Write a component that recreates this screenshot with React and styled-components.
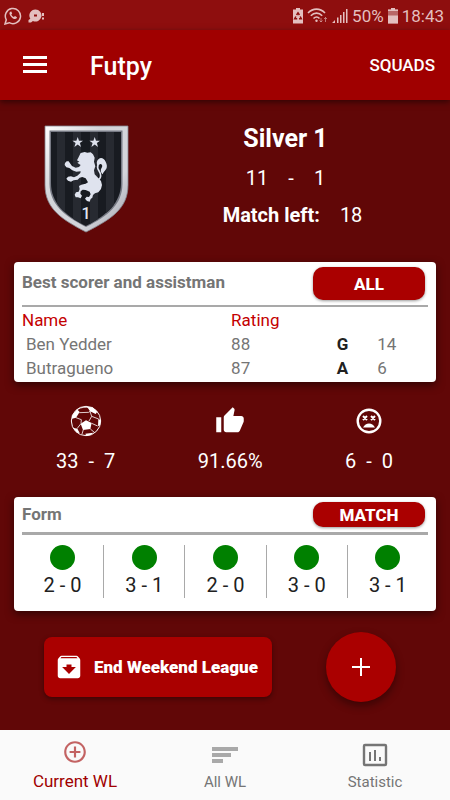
/* eslint-disable react/prop-types */

import styled, { createGlobalStyle } from "styled-components";
import { MdThumbUp, MdArchive, MdAddCircleOutline } from "react-icons/md";

const GlobalStyle = createGlobalStyle`
  * {
    box-sizing: border-box;
  }

  body {
    margin: 0;
    background-color: #610707;
    font-family: Roboto, "Liberation Sans", sans-serif;
  }

  button {
    border: none;
    padding: 0;
    font-family: inherit;
    cursor: pointer;
  }
`;

const Page = styled.div`
  display: flex;
  flex-direction: column;
  min-height: 100vh;
`;

const StatusBar = styled.div`
  display: flex;
  align-items: center;
  justify-content: space-between;
  height: 30px;
  padding: 2px 6px 0 4px;
  background-color: #8e0e0e;
  color: #e3bfbf;
  font-size: 17px;
`;

const StatusGroup = styled.div`
  display: flex;
  align-items: center;
  gap: ${(props) => props.$gap}px;
`;

const AppBar = styled.header`
  display: flex;
  align-items: center;
  height: 70px;
  padding: 0 15px 0 23px;
  background-color: #a00000;
  color: #fff;
  box-shadow: 0 2px 6px rgba(0, 0, 0, 0.5);
`;

const MenuButton = styled.button`
  display: flex;
  background: none;
  color: #fff;
`;

const AppTitle = styled.h1`
  flex: 1;
  margin: 2px 0 0 43px;
  font-size: 25px;
  font-weight: 500;
`;

const SquadsButton = styled.button`
  background: none;
  color: #fff;
  font-size: 17px;
  font-weight: 500;
`;

const Main = styled.main`
  display: flex;
  flex: 1;
  flex-direction: column;
  padding: 22px 14px 0;
`;

const Hero = styled.section`
  display: flex;
  height: 112px;
  margin-bottom: 28px;
  padding-left: 29px;
  color: #fff;
`;

const HeroText = styled.div`
  display: flex;
  flex: 1;
  flex-direction: column;
  align-items: center;
  padding-left: 12px;
`;

const Rank = styled.h2`
  margin: 1px 0 7px;
  padding-right: 6px;
  font-size: 25px;
  font-weight: 700;
  line-height: 32px;
`;

const Score = styled.div`
  display: flex;
  gap: ${(props) => props.$gap}px;
  padding-right: ${(props) => (props.$inset ? 6 : 0)}px;
  font-size: 20px;
  line-height: 32px;
`;

const MatchLeft = styled.div`
  display: flex;
  gap: 20px;
  margin-top: 5px;
  padding-left: 8px;
  font-size: 20px;
  line-height: 32px;
`;

const Card = styled.section`
  padding: 5px 8px ${(props) => props.$bottom}px;
  border-radius: 4px;
  background-color: #fff;
  box-shadow: 0 3px 8px rgba(0, 0, 0, 0.5);
`;

const CardHeader = styled.div`
  display: flex;
  align-items: flex-start;
  justify-content: space-between;
  padding-right: 3px;
  padding-bottom: 5px;
  border-bottom: ${(props) => props.$line}px solid #a9a9a9;
`;

const CardTitle = styled.h3`
  margin: ${(props) => props.$top}px 0 0;
  color: #757575;
  font-size: 17px;
  font-weight: 700;
  line-height: 24px;
`;

const PillButton = styled.button`
  width: 112px;
  height: ${(props) => props.$height}px;
  border-radius: 10px;
  background-color: #aa0000;
  color: #fff;
  font-size: 17px;
  font-weight: 800;
  line-height: 24px;
  box-shadow: 0 1px 3px rgba(0, 0, 0, 0.4);
`;

const PlayerTable = styled.table`
  width: 100%;
  margin-top: 1px;
  border-collapse: collapse;
  table-layout: fixed;
  color: #757575;
  font-size: 17px;
  line-height: 24px;

  th,
  td {
    padding: 0;
    font-weight: 400;
    text-align: left;
  }

  thead th {
    color: #c40000;
  }

  tbody th {
    padding-left: 4px;
  }

  tbody td:nth-child(3) {
    color: #212121;
    font-weight: 700;
  }
`;

const Stats = styled.section`
  display: flex;
  justify-content: space-between;
  padding: 21px 43px 20px 42px;
  color: #fff;
`;

const Stat = styled.div`
  display: flex;
  flex-direction: column;
  align-items: center;
  gap: 6px;
`;

const StatIcon = styled.div`
  display: flex;
  align-items: center;
  height: 36px;
`;

const FormList = styled.ul`
  display: grid;
  grid-template-columns: repeat(5, 1fr);
  margin: 10px 0 0;
  padding: 0;
  list-style: none;
`;

const FormItem = styled.li`
  display: flex;
  flex-direction: column;
  align-items: center;
  gap: 3px;
  color: #212121;
  font-size: 20px;
  line-height: 25px;

  & + & {
    border-left: 1px solid #a9a9a9;
  }
`;

const Dot = styled.span`
  width: 25px;
  height: 25px;
  border-radius: 50%;
  background-color: ${(props) => (props.$won ? "#008000" : "#aa0000")};
`;

const Actions = styled.div`
  display: flex;
  align-items: center;
  justify-content: space-between;
  padding: 21px 40px 20px 30px;
`;

const EndButton = styled.button`
  display: flex;
  align-items: center;
  gap: 10px;
  height: 60px;
  padding: 0 14px 0 10px;
  border-radius: 8px;
  background-color: #aa0000;
  color: #fff;
  font-size: 17px;
  font-weight: 900;
  box-shadow: 0 2px 5px rgba(0, 0, 0, 0.4);
`;

const AddButton = styled.button`
  display: flex;
  align-items: center;
  justify-content: center;
  width: 70px;
  height: 70px;
  border-radius: 50%;
  background-color: #aa0000;
  color: #fff;
  box-shadow: 0 4px 8px rgba(0, 0, 0, 0.4);
`;

const BottomNav = styled.nav`
  display: grid;
  grid-template-columns: repeat(3, 1fr);
  height: 70px;
  background-color: #fafafa;
`;

const NavLink = styled.a`
  display: flex;
  flex-direction: column;
  align-items: center;
  padding-top: ${(props) => (props.$active ? 9 : 12)}px;
  gap: ${(props) => (props.$active ? 4 : 2)}px;
  color: ${(props) => (props.$active ? "#a00000" : "#757575")};
  font-size: ${(props) => (props.$active ? 17 : 15)}px;
  line-height: 24px;
  text-decoration: none;
`;

const NavIcon = styled.span`
  display: flex;
  opacity: ${(props) => props.$opacity || 1};
`;

const ChatIcon = () => (
  <svg width="18" height="18" viewBox="0 0 18 18" fill="none" stroke="currentColor">
    <path d="M1 17l1.3-4.2A7.6 7.6 0 1 1 5.2 15.7z" strokeWidth="1.5" />
    <path
      d="M6.2 4.8c-1.4 1-.8 3 .9 4.9s4 3.2 5.6 1.6l.3-1-2-1.200-1.200 1c-1.200-.5-2-1.400-2.500-2.500l.9-1-.9-2z"
      fill="currentColor"
      stroke="none"
    />
  </svg>
);

const DiscIcon = () => (
  <svg width="17" height="16" viewBox="0 0 17 16" fill="currentColor">
    <path
      fillRule="evenodd"
      d="M7.5 1.5a6 6 0 1 1-2.6 11.4L3 14.5H.5V12l1.800-1.300A6 6 0 0 1 7.500 1.500zM6 6.500v2h3v-2z"
    />
    <path d="M14 5h2v3h-2zM14 9.500h2v2h-2z" />
  </svg>
);

const SaverIcon = () => (
  <svg width="10" height="16" viewBox="0 0 10 16">
    <path d="M3 0h4v1.500h3V15.500H0V1.500h3z" fill="currentColor" />
    <path
      d="M3.600 7L5 4.800 6.400 7M7.200 8.500l1.100 2.200H6M4.200 10.700H1.700l1.200-2.200"
      fill="none"
      stroke="#8e0e0e"
      strokeWidth="1.5"
    />
  </svg>
);

const WifiIcon = () => (
  <svg width="21" height="16" viewBox="0 0 21 16" fill="none" stroke="currentColor" strokeWidth="1.6">
    <path d="M1 5C6-.2 13-.2 18 5M3.800 7.800c3.500-3.600 8-3.600 11.400 0M6.500 10.500c2-2 4.200-2 6 0" />
    <circle cx="9.5" cy="12.8" r="1.2" fill="currentColor" stroke="none" />
    <path d="M14 10v4m-1.500-1.500L14 14l1.500-1.500M18.500 14v-4.500M17 11l1.500-1.500L20 11" strokeWidth="1" opacity="0.6" />
  </svg>
);

const SignalIcon = () => (
  <svg width="16" height="16" viewBox="0 0 16 16" fill="currentColor">
    <path d="M0 15l3-3v3zM5 9.500h1.500V15H5zM8 7h1.500v8H8zM11 4h1.500v11H11zM14 1h1.500v14H14z" />
  </svg>
);

const BatteryIcon = () => (
  <svg width="10" height="16" viewBox="0 0 10 16" fill="currentColor">
    <path d="M3 0h4v1.500h3V15.500H0V1.500h3z" opacity="0.5" />
    <path d="M3 0h4v1.500h3V3H0V1.500h3zM0 7.500h10v8H0z" />
  </svg>
);

const MenuIcon = () => (
  <svg width="24" height="18" viewBox="0 0 24 18" fill="currentColor">
    <path d="M0 0h24v3H0zM0 7h24v3H0zM0 14h24v3H0z" />
  </svg>
);

const Crest = () => (
  <svg width="86" height="112" viewBox="0 0 86 112">
    <defs>
      <linearGradient id="rim" x1="0" y1="0" x2="1" y2="1">
        <stop offset="0" stopColor="#ffffff" />
        <stop offset="0.35" stopColor="#d3d5da" />
        <stop offset="0.7" stopColor="#d4d5db" />
        <stop offset="1" stopColor="#9b9ea8" />
      </linearGradient>
      <clipPath id="field">
        <path d="M8 10h70v51c0 20-14 32-35.200 43C21.500 93 8 81 8 61z" />
      </clipPath>
    </defs>
    <path
      d="M2 4h83V63c0 24-17.500 34.500-42 47C19 97.500 2 87 2 63z"
      fill="url(#rim)"
      stroke="#85878f"
      strokeWidth="0.8"
    />
    <path d="M6.500 8.500h73v53c0 21-14.500 32.500-36.500 43.500C21.500 94 6.500 82.500 6.500 61.500z" fill="#777a84" />
    <g clipPath="url(#field)">
      <path d="M0 0h86v112H0z" fill="#181b21" />
      <path d="M14 0h8v112h-8zM30 0h8v112h-8zM47 0h8v112h-8zM63 0h8v112h-8z" fill="#272a31" />
    </g>
    <g fill="#dfe3ee">
      <path d="M34.700 15l1.300 3.700h4l-3.200 2.400 1.200 3.800-3.300-2.300-3.300 2.300 1.200-3.800-3.200-2.400h4z" />
      <path d="M51.700 15l1.300 3.700h4l-3.200 2.400 1.200 3.800-3.300-2.300-3.300 2.300 1.200-3.800-3.200-2.400h4z" />
    </g>
    <g transform="translate(-13 -7) scale(0.3333)" fill="#dfe3ee">
      <path d="M152 114l12-3 8 2 10-1 7 6 5 10-2 12 4 14-4 12 2 12 10 10 9 10 3 12-3 12-8 10-10 3-6 5-2 8-5 4-3 8-8-2-6-7 5-6 7 1 5-8-3-8-12-5-9-1-6 5-1 7 5 6-4 8-8-3-7 0-3-8 4-7 8-2 3-8-2-9 7-4 13-3 7-4-7-12-10-4-8 2-6 6-12 2-8 4-9-3-5-6 5-6 9-1 9 3 10-5 9-8 1-5-13 1-12-4-9-7-9-2-5-7 1-6 5-5 6 0 4 6 6 8 11 5 10-2 5-6-5-3-5-4 6-3-7-4 4-8z" />
      <path d="M206 132c8-6 16-1 21 8 4 8 5 15 2 21-4 7-9 9-11 17-5-5-8-13-3-20 3-4 2-9-2-11-4-1-6 3-10 7-4-9-4-16 3-22z" />
      <path d="M204 150c-6 14 9 18 8 33-1 7-5 12-12 11" fill="none" stroke="#dfe3ee" strokeWidth="5" />
    </g>
    <text
      x="43"
      y="97"
      textAnchor="middle"
      fill="#e2e6f0"
      fontFamily="Roboto, sans-serif"
      fontSize="16"
      fontWeight="500"
    >
      1
    </text>
  </svg>
);

const BallIcon = () => (
  <svg width="32" height="32" viewBox="90 30 96 96" fill="currentColor">
    <circle cx="138" cy="78" r="44" fill="none" stroke="currentColor" strokeWidth="3" />
    <path d="M122 86l16-10 17 8-4 18-22 3z" />
    <path d="M142 36l16 1 14 13-5 7-17-8z" />
    <path d="M96 62l15-19 8 8-11 17-12 3z" />
    <path d="M175 72l7 3-1 14-7 5zM98 98l14 3 7 13-8-1zM136 116l24-3-9 8-12 2z" />
    <path
      d="M118 53l28-1 6-4M150 49l5 15-8 14M155 64l21 8M155 85l18 8M108 68l16 6-1 12M122 87l-11 14M130 104l-4 13M151 102l12 10M112 43c14-7 25-8 38-4"
      fill="none"
      stroke="currentColor"
      strokeWidth="2.4"
    />
  </svg>
);

const DizzyIcon = () => (
  <svg width="26" height="26" viewBox="0 0 26 26" fill="none" stroke="currentColor" strokeWidth="2.4">
    <circle cx="13" cy="13" r="11.3" />
    <path d="M7 8l4 4M11 8l-4 4M15 8l4 4M19 8l-4 4" strokeWidth="2" />
    <path d="M7 19.500c1.500-2.500 3.500-4 6-4s4.500 1.500 6 4z" fill="currentColor" stroke="none" />
  </svg>
);

const PlusIcon = () => (
  <svg width="18" height="18" viewBox="0 0 18 18" fill="currentColor">
    <path d="M8 0h2v8h8v2h-8v8H8v-8H0V8h8z" />
  </svg>
);

const ListIcon = () => (
  <svg width="26" height="26" viewBox="0 0 26 26" fill="currentColor">
    <path d="M0 5h26v4H0zM0 11h19v4H0zM0 17h11v4H0z" />
  </svg>
);

const ChartIcon = () => (
  <svg width="26" height="26" viewBox="0 0 26 26" fill="none" stroke="currentColor" strokeWidth="2.4">
    <rect x="2" y="3" width="22" height="20" rx="1" />
    <path d="M8 10v9M13 8v11M18 15v4" strokeWidth="2" />
  </svg>
);

const players = [
  { name: "Ben Yedder", rating: 88, type: "G", count: 14 },
  { name: "Butragueno", rating: 87, type: "A", count: 6 },
];

const form = [
  [2, 0],
  [3, 1],
  [2, 0],
  [3, 0],
  [3, 1],
];

const ScoreLine = ({ left, right, gap, inset }) => (
  <Score $gap={gap} $inset={inset}>
    <span>{left}</span>
    <span>-</span>
    <span>{right}</span>
  </Score>
);

const App = () => {
  return (
    <Page>
      <GlobalStyle />
      <StatusBar>
        <StatusGroup $gap={6}>
          <ChatIcon />
          <DiscIcon />
        </StatusGroup>
        <StatusGroup $gap={4}>
          <SaverIcon />
          <WifiIcon />
          <SignalIcon />
          <span>50%</span>
          <BatteryIcon />
          <span>18:43</span>
        </StatusGroup>
      </StatusBar>
      <AppBar>
        <MenuButton aria-label="Menu">
          <MenuIcon />
        </MenuButton>
        <AppTitle>Futpy</AppTitle>
        <SquadsButton>SQUADS</SquadsButton>
      </AppBar>

      <Main>
        <Hero>
          <Crest />
          <HeroText>
            <Rank>Silver 1</Rank>
            <ScoreLine left={11} right={1} gap={20} inset />
            <MatchLeft>
              <strong>Match left:</strong>
              <span>18</span>
            </MatchLeft>
          </HeroText>
        </Hero>

        <Card $bottom={2}>
          <CardHeader $line={2}>
            <CardTitle $top={3}>Best scorer and assistman</CardTitle>
            <PillButton $height={33}>ALL</PillButton>
          </CardHeader>
          <PlayerTable>
            <colgroup>
              <col />
              <col style={{ width: "26%" }} />
              <col style={{ width: "10%" }} />
              <col style={{ width: "12.5%" }} />
            </colgroup>
            <thead>
              <tr>
                <th scope="col">Name</th>
                <th scope="col">Rating</th>
                <td />
                <td />
              </tr>
            </thead>
            <tbody>
              {players.map((player) => (
                <tr key={player.name}>
                  <th scope="row">{player.name}</th>
                  <td>{player.rating}</td>
                  <td>{player.type}</td>
                  <td>{player.count}</td>
                </tr>
              ))}
            </tbody>
          </PlayerTable>
        </Card>

        <Stats>
          <Stat>
            <StatIcon>
              <BallIcon />
            </StatIcon>
            <ScoreLine left={33} right={7} gap={10} />
          </Stat>
          <Stat>
            <StatIcon>
              <MdThumbUp size={30} />
            </StatIcon>
            <Score>91.66%</Score>
          </Stat>
          <Stat>
            <StatIcon>
              <DizzyIcon />
            </StatIcon>
            <ScoreLine left={6} right={0} gap={10} />
          </Stat>
        </Stats>

        <Card $bottom={13}>
          <CardHeader $line={3}>
            <CardTitle $top={0}>Form</CardTitle>
            <PillButton $height={25}>MATCH</PillButton>
          </CardHeader>
          <FormList>
            {form.map(([scored, conceded], index) => (
              <FormItem key={index}>
                <Dot $won={scored > conceded} />
                <span>
                  {scored} - {conceded}
                </span>
              </FormItem>
            ))}
          </FormList>
        </Card>

        <Actions>
          <EndButton>
            <MdArchive size={30} />
            End Weekend League
          </EndButton>
          <AddButton aria-label="Add match">
            <PlusIcon />
          </AddButton>
        </Actions>
      </Main>

      <BottomNav>
        <NavLink href="#current" $active>
          <NavIcon $opacity={0.6}>
            <MdAddCircleOutline size={26} />
          </NavIcon>
          Current WL
        </NavLink>
        <NavLink href="#all">
          <NavIcon $opacity={0.6}>
            <ListIcon />
          </NavIcon>
          All WL
        </NavLink>
        <NavLink href="#statistic">
          <NavIcon>
            <ChartIcon />
          </NavIcon>
          Statistic
        </NavLink>
      </BottomNav>
    </Page>
  );
};

export default App;
